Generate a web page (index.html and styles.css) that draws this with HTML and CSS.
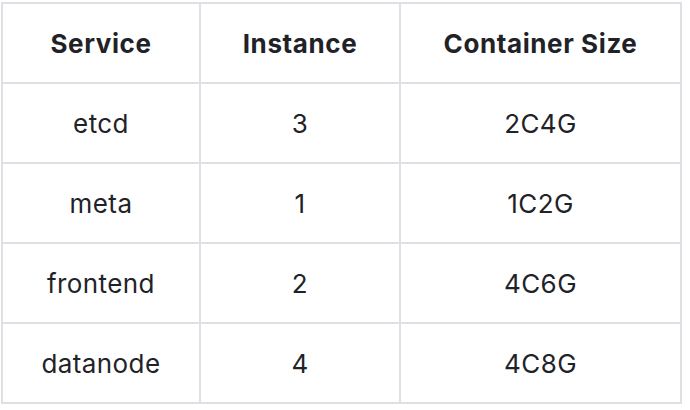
FILE: index.html
```html
<!DOCTYPE html>
<html>
<head>
<meta charset="utf-8">
<link rel="stylesheet" href="styles.css">
</head>
<body>
<table class="spec">
  <thead>
    <tr><th class="c1">Service</th><th class="c2">Instance</th><th class="c3">Container Size</th></tr>
  </thead>
  <tbody>
    <tr><td>etcd</td><td>3</td><td>2C4G</td></tr>
    <tr><td>meta</td><td>1</td><td>1C2G</td></tr>
    <tr><td>frontend</td><td>2</td><td>4C6G</td></tr>
    <tr><td>datanode</td><td>4</td><td>4C8G</td></tr>
  </tbody>
</table>
</body>
</html>
```
FILE: styles.css
```css
html, body {
  margin: 0;
  background: #ffffff;
}
body {
  padding: 2px 0 0 1px;
  font-family: Inter, "Noto Sans", sans-serif;
  color: #1f2328;
}
.spec {
  border-collapse: collapse;
  font-size: 26px;
}
.spec th, .spec td {
  border: 2px solid #dfe0e6;
  height: 78px;
  padding: 0;
  text-align: center;
  vertical-align: middle;
}
.spec th {
  font-weight: 700;
  letter-spacing: 0.6px;
}
.spec td {
  font-weight: 400;
  letter-spacing: 0.4px;
}
.c1 { width: 196px; }
.c2 { width: 198px; }
.c3 { width: 279px; }
```
